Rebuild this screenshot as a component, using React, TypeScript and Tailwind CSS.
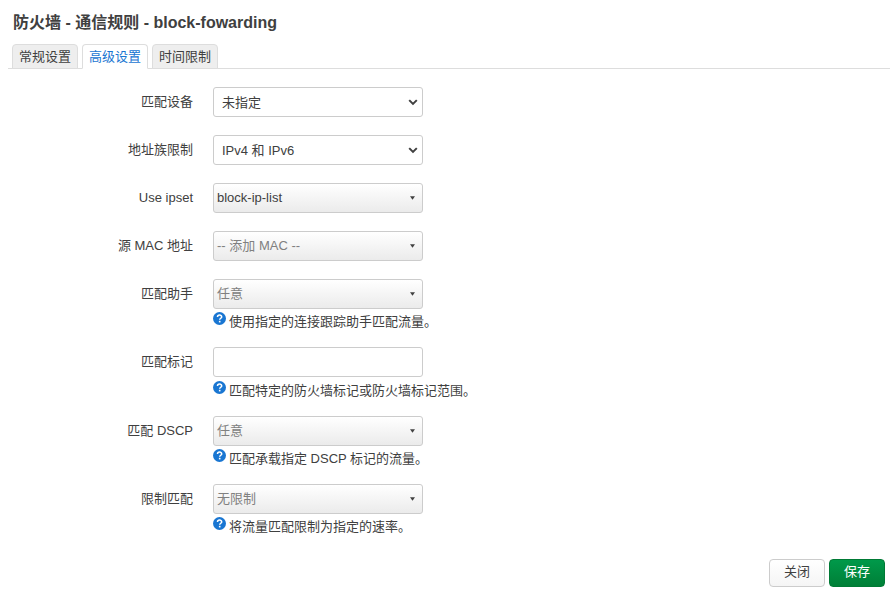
import type { ReactNode } from "react";

function NativeSelect({ value }: { value: string }) {
  return (
    <div className="flex h-[30px] w-[210px] items-center justify-between rounded-[3px] border border-[#ccc] bg-white pr-1 pl-2">
      <span className="pt-px">{value}</span>
      <svg width="10" height="8" viewBox="0 0 10 8" fill="none">
        <path d="M1.2 2.1 5 5.9 8.8 2.1" stroke="#404040" strokeWidth="2" />
      </svg>
    </div>
  );
}

function Dropdown({ value, muted }: { value: string; muted?: boolean }) {
  return (
    <div className="flex h-[30px] w-[210px] items-center justify-between rounded-[3px] border border-[#ccc] bg-linear-to-b from-white to-[#ebebeb] pr-[7px] pl-[3px]">
      <span className={muted ? "text-[#808080]" : "text-[#404040]"}>{value}</span>
      <svg width="5" height="4" viewBox="0 0 5 4">
        <path d="M0 0.3H5L2.5 3.8Z" fill="#404040" />
      </svg>
    </div>
  );
}

function Help({ text }: { text: string }) {
  return (
    <div className="flex h-[20px] pt-[3px]">
      <svg width="13" height="13" viewBox="0 0 13 13" className="mr-[3px] shrink-0">
        <circle cx="6.5" cy="6.5" r="6.5" fill="#1976d2" />
        <path d="M4.5 5.1C4.5 2.4 8.7 2.5 8.7 4.9C8.7 6.3 6.7 6.2 6.7 7.8" fill="none" stroke="#fff" strokeWidth="1.5" />
        <rect x="5.9" y="8.8" width="1.6" height="1.6" fill="#fff" />
      </svg>
      <span className="pt-px whitespace-nowrap">{text}</span>
    </div>
  );
}

function Row({ label, help, children }: { label: string; help?: string; children: ReactNode }) {
  return (
    <div className="flex gap-5">
      <label className="w-[185px] shrink-0 pt-[6px] text-right">{label}</label>
      <div>
        {children}
        {help && <Help text={help} />}
      </div>
    </div>
  );
}

const tab = "h-[25px] w-[66px] rounded-t-[4px] border border-[#ddd] pt-[3px] text-center";

export default function App() {
  return (
    <main className="flex h-[592px] w-[891px] flex-col bg-white pl-2 font-['Liberation_Sans','Noto_Sans_CJK_SC',sans-serif] text-[13px] leading-[18px] text-[#404040]">
      <h1 className="h-11 pt-[11px] pl-[5px] text-[16px] leading-[24px] font-bold">防火墙 - 通信规则 - block-fowarding</h1>
      <nav className="mr-px flex h-[25px] gap-1 border-b border-[#ddd] pl-1">
        <div className={`${tab} bg-[#eee]`}>常规设置</div>
        <div className={`${tab} border-b-white bg-white text-[#1976d2]`}>高级设置</div>
        <div className={`${tab} bg-[#eee]`}>时间限制</div>
      </nav>
      <div className="flex flex-1 flex-col gap-[18px] pt-[18px]">
        <Row label="匹配设备"><NativeSelect value="未指定" /></Row>
        <Row label="地址族限制"><NativeSelect value="IPv4 和 IPv6" /></Row>
        <Row label="Use ipset"><Dropdown value="block-ip-list" /></Row>
        <Row label="源 MAC 地址"><Dropdown value="-- 添加 MAC --" muted /></Row>
        <Row label="匹配助手" help="使用指定的连接跟踪助手匹配流量。"><Dropdown value="任意" muted /></Row>
        <Row label="匹配标记" help="匹配特定的防火墙标记或防火墙标记范围。">
          <div className="mb-px h-[30px] w-[210px] rounded-[3px] border border-[#ccc]" />
        </Row>
        <Row label="匹配 DSCP" help="匹配承载指定 DSCP 标记的流量。"><Dropdown value="任意" muted /></Row>
        <Row label="限制匹配" help="将流量匹配限制为指定的速率。"><Dropdown value="无限制" muted /></Row>
      </div>
      <footer className="flex justify-end gap-1 pr-[6px] pb-[5px]">
        <button className="h-7 w-14 rounded-[4px] border border-[#ccc] bg-linear-to-b from-white to-[#f5f5f5] pb-0.5">关闭</button>
        <button className="h-7 w-14 rounded-[4px] border border-[#007a35] bg-linear-to-b from-[#00994a] to-[#007f37] pb-0.5 text-white">保存</button>
      </footer>
    </main>
  );
}
